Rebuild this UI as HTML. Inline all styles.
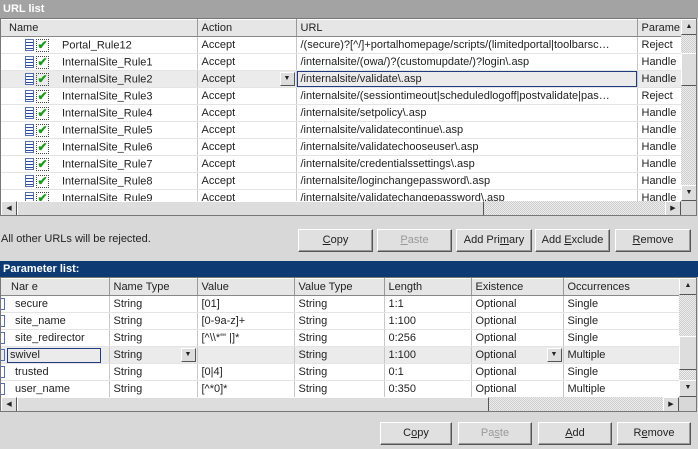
<!DOCTYPE html>
<html><head><style>
*{margin:0;padding:0;box-sizing:border-box}
body{width:698px;height:449px;background:#d8d8d8;font-family:"Liberation Sans",Tahoma,sans-serif;font-size:11px;color:#222;position:relative;overflow:hidden}
.a{position:absolute}
.bar{position:absolute;left:0;width:698px;font-weight:bold;color:#fff;padding-left:3px;font-size:11px}
table{border-collapse:collapse;table-layout:fixed;position:absolute}
td{height:17px;white-space:nowrap;overflow:hidden;padding-left:4px;border-right:1px solid #c8c8c8;border-bottom:1px solid #e4e4e4;background:#fff}
tr.h td{background:#e6e6e6;border-right:1px solid #999;border-bottom:1px solid #888;border-top:1px solid #fff}
tr.s td{background:#ebebeb}
.btn{position:absolute;height:23px;background:#e0e0e0;border:1px solid;border-color:#fff #555 #555 #fff;box-shadow:inset -1px -1px 0 #999;text-align:center;line-height:21px}
.dis{color:#999}
.sb{position:absolute;background:repeating-conic-gradient(#eee 0 25%,#ccc 0 50%) 0 0/2px 2px}
.ar{position:absolute;background:#ddd;border:1px solid;border-color:#fff #555 #555 #fff;font-size:7px;text-align:center;line-height:14px}
.ic{display:inline-block;width:9px;height:12px;border:1px solid #5570b0;background:linear-gradient(#fff 2px,#2a4aa0 2px,#2a4aa0 3px,#fff 3px,#fff 5px,#2a4aa0 5px,#2a4aa0 6px,#fff 6px,#fff 8px,#2a4aa0 8px,#2a4aa0 9px,#fff 9px);vertical-align:middle;margin-left:20px}
.ck{display:inline-block;width:13px;height:13px;border:1px dotted #444;color:#1a9a1a;font-weight:bold;font-size:12px;line-height:11px;text-align:center;vertical-align:middle;margin:0 13px 0 2px}
.pi{display:inline-block;width:4px;height:12px;border:1px solid #5570b0;border-left:none;vertical-align:middle;margin-left:-4px;margin-right:10px}
.dd{position:absolute;width:15px;height:14px;background:#ddd;border:1px solid;border-color:#fff #555 #555 #fff;font-size:7px;text-align:center;line-height:12px}
</style></head><body>
<div class="bar" style="top:0;height:18px;background:#a3a3a3;line-height:18px">URL list</div>
<div class="a" style="left:0;top:18px;width:697px;height:198px;border:1px solid #777;background:#fff;overflow:hidden">
<table style="left:0;top:0;width:680px">
<colgroup><col style="width:196px"><col style="width:99px"><col style="width:341px"><col style="width:44px"></colgroup>
<tr class="h"><td style="padding-left:8px">Name</td><td>Action</td><td>URL</td><td>Parame</td></tr>
<tr><td><span class="ic"></span><span class="ck">✔</span>Portal_Rule12</td><td>Accept</td><td>/(secure)?[^/]+portalhomepage/scripts/(limitedportal|toolbarsc…</td><td>Reject</td></tr>
<tr><td><span class="ic"></span><span class="ck">✔</span>InternalSite_Rule1</td><td>Accept</td><td>/internalsite/(owa/)?(customupdate/)?login\.asp</td><td>Handle</td></tr>
<tr class="s"><td><span class="ic"></span><span class="ck">✔</span>InternalSite_Rule2</td><td style="position:relative">Accept<span class="dd" style="right:1px;top:1px">▼</span></td><td style="background:#ebebeb;box-shadow:inset 0 0 0 1px #223a80">/internalsite/validate\.asp</td><td>Handle</td></tr>
<tr><td><span class="ic"></span><span class="ck">✔</span>InternalSite_Rule3</td><td>Accept</td><td>/internalsite/(sessiontimeout|scheduledlogoff|postvalidate|pas…</td><td>Reject</td></tr>
<tr><td><span class="ic"></span><span class="ck">✔</span>InternalSite_Rule4</td><td>Accept</td><td>/internalsite/setpolicy\.asp</td><td>Handle</td></tr>
<tr><td><span class="ic"></span><span class="ck">✔</span>InternalSite_Rule5</td><td>Accept</td><td>/internalsite/validatecontinue\.asp</td><td>Handle</td></tr>
<tr><td><span class="ic"></span><span class="ck">✔</span>InternalSite_Rule6</td><td>Accept</td><td>/internalsite/validatechooseuser\.asp</td><td>Handle</td></tr>
<tr><td><span class="ic"></span><span class="ck">✔</span>InternalSite_Rule7</td><td>Accept</td><td>/internalsite/credentialssettings\.asp</td><td>Handle</td></tr>
<tr><td><span class="ic"></span><span class="ck">✔</span>InternalSite_Rule8</td><td>Accept</td><td>/internalsite/loginchangepassword\.asp</td><td>Handle</td></tr>
<tr><td><span class="ic"></span><span class="ck">✔</span>InternalSite_Rule9</td><td>Accept</td><td>/internalsite/validatechangepassword\.asp</td><td>Handle</td></tr>
</table>
<div class="sb" style="left:680px;top:0;width:16px;height:182px"></div>
<div class="ar" style="left:680px;top:0;width:16px;height:16px">▲</div>
<div class="ar" style="left:680px;top:34px;width:16px;height:33px"></div>
<div class="ar" style="left:680px;top:166px;width:16px;height:16px">▼</div>
<div class="sb" style="left:0;top:182px;width:680px;height:15px"></div>
<div class="ar" style="left:0;top:182px;width:16px;height:15px">◀</div>
<div class="ar" style="left:16px;top:182px;width:467px;height:15px"></div>
<div class="ar" style="left:664px;top:182px;width:16px;height:15px">▶</div>
<div class="a" style="left:680px;top:182px;width:16px;height:15px;background:#d8d8d8"></div>
</div>
<div class="a" style="left:1px;top:233px">All other URLs will be rejected.</div>
<div class="btn" style="left:298px;top:229px;width:75px"><u>C</u>opy</div>
<div class="btn dis" style="left:377px;top:229px;width:75px"><u>P</u>aste</div>
<div class="btn" style="left:456px;top:229px;width:76px">Add Pri<u>m</u>ary</div>
<div class="btn" style="left:535px;top:229px;width:75px">Add <u>E</u>xclude</div>
<div class="btn" style="left:615px;top:229px;width:76px"><u>R</u>emove</div>
<div class="bar" style="top:261px;height:16px;background:#0d3a73;line-height:16px">Parameter list:</div>
<div class="a" style="left:0;top:277px;width:697px;height:135px;border:1px solid #777;background:#fff;overflow:hidden">
<table style="left:0;top:0;width:678px">
<colgroup><col style="width:108px"><col style="width:88px"><col style="width:97px"><col style="width:90px"><col style="width:87px"><col style="width:92px"><col style="width:116px"></colgroup>
<tr class="h"><td style="padding-left:10px">Nar e</td><td>Name Type</td><td>Value</td><td>Value Type</td><td>Length</td><td>Existence</td><td>Occurrences</td></tr>
<tr><td><span class="pi"></span>secure</td><td>String</td><td>[01]</td><td>String</td><td>1:1</td><td>Optional</td><td>Single</td></tr>
<tr><td><span class="pi"></span>site_name</td><td>String</td><td>[0-9a-z]+</td><td>String</td><td>1:100</td><td>Optional</td><td>Single</td></tr>
<tr><td><span class="pi"></span>site_redirector</td><td>String</td><td>[^\\*"' |]*</td><td>String</td><td>0:256</td><td>Optional</td><td>Single</td></tr>
<tr class="s"><td style="padding-left:0"><span class="pi" style="margin-left:0;margin-right:2px"></span><span style="display:inline-block;width:94px;border:1px solid #223a80;padding-left:2px;height:15px;line-height:13px;vertical-align:middle">swivel</span></td><td style="position:relative">String<span class="dd" style="right:1px;top:1px">▼</span></td><td></td><td>String</td><td>1:100</td><td style="position:relative">Optional<span class="dd" style="right:1px;top:1px">▼</span></td><td>Multiple</td></tr>
<tr><td><span class="pi"></span>trusted</td><td>String</td><td>[0|4]</td><td>String</td><td>0:1</td><td>Optional</td><td>Single</td></tr>
<tr><td><span class="pi"></span>user_name</td><td>String</td><td>[^*0]*</td><td>String</td><td>0:350</td><td>Optional</td><td>Multiple</td></tr>
</table>
<div class="sb" style="left:678px;top:0;width:18px;height:119px"></div>
<div class="ar" style="left:678px;top:0;width:18px;height:17px">▲</div>
<div class="ar" style="left:678px;top:58px;width:18px;height:34px"></div>
<div class="ar" style="left:678px;top:102px;width:18px;height:17px">▼</div>
<div class="sb" style="left:0;top:119px;width:678px;height:15px"></div>
<div class="ar" style="left:0;top:119px;width:16px;height:15px">◀</div>
<div class="ar" style="left:16px;top:119px;width:472px;height:15px"></div>
<div class="ar" style="left:662px;top:119px;width:16px;height:15px">▶</div>
<div class="a" style="left:678px;top:119px;width:18px;height:15px;background:#d8d8d8"></div>
</div>
<div class="btn" style="left:380px;top:422px;width:72px">C<u>o</u>py</div>
<div class="btn dis" style="left:458px;top:422px;width:74px">Pa<u>s</u>te</div>
<div class="btn" style="left:538px;top:422px;width:74px"><u>A</u>dd</div>
<div class="btn" style="left:617px;top:422px;width:74px">R<u>e</u>move</div>
</body></html>
